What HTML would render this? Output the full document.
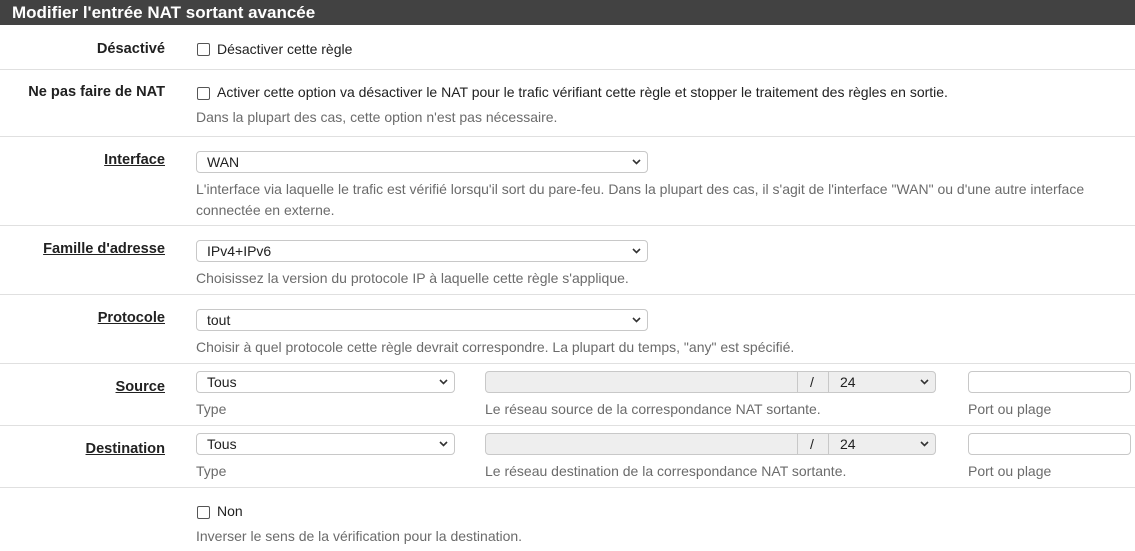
<!DOCTYPE html><html><head><meta charset="utf-8"><style>
body{margin:0;width:1135px;height:551px;overflow:hidden;background:#fff;font-family:"Liberation Sans",sans-serif;font-size:14px;color:#212121;position:relative}
.a{position:absolute;white-space:nowrap}
.hd{left:0;top:0;width:1135px;height:25px;background:#424242;color:#fff;font-weight:bold;font-size:17px;line-height:25px;padding-left:12px;box-sizing:border-box}
.sep{position:absolute;left:0;width:1135px;height:1px;background:#e0e0e0}
.lb{right:970px;font-weight:bold;text-align:right;font-size:14.6px}
.u{text-decoration:underline}
.hp{color:#6b6b6b}
.cb{position:absolute;width:11px;height:11px;border:1px solid #555;border-radius:2px;background:#fff}
.sel{position:absolute;border:1px solid #c8c8c8;border-radius:4px;height:22px;box-sizing:border-box;background:#fff;line-height:20px;padding-left:10px}
.sel svg{position:absolute;right:6px;top:7px}
.gr{background:#eee}
</style></head><body>
<div class="a hd">Modifier l'entrée NAT sortant avancée</div>
<div class="a lb" style="top:41px">Désactivé</div>
<div class="cb" style="left:197px;top:43px"></div>
<div class="a" style="left:217px;top:41px">Désactiver cette règle</div>
<div class="sep" style="top:69px"></div>
<div class="a lb" style="top:84px">Ne pas faire de NAT</div>
<div class="cb" style="left:197px;top:87px"></div>
<div class="a" style="left:217px;top:84px">Activer cette option va désactiver le NAT pour le trafic vérifiant cette règle et stopper le traitement des règles en sortie.</div>
<div class="a hp" style="left:196px;top:109px">Dans la plupart des cas, cette option n'est pas nécessaire.</div>
<div class="sep" style="top:136px"></div>
<div class="a lb u" style="top:152px">Interface</div>
<div class="sel" style="left:196px;top:151px;width:452px">WAN<svg width="9" height="6"><path d="M1 1l3.5 3.5L8 1" stroke="#333" stroke-width="1.6" fill="none"/></svg></div>
<div class="a hp" style="left:196px;top:181px">L'interface via laquelle le trafic est vérifié lorsqu'il sort du pare-feu. Dans la plupart des cas, il s'agit de l'interface "WAN" ou d'une autre interface</div>
<div class="a hp" style="left:196px;top:202px">connectée en externe.</div>
<div class="sep" style="top:225px"></div>
<div class="a lb u" style="top:241px">Famille d'adresse</div>
<div class="sel" style="left:196px;top:240px;width:452px">IPv4+IPv6<svg width="9" height="6"><path d="M1 1l3.5 3.5L8 1" stroke="#333" stroke-width="1.6" fill="none"/></svg></div>
<div class="a hp" style="left:196px;top:270px">Choisissez la version du protocole IP à laquelle cette règle s'applique.</div>
<div class="sep" style="top:294px"></div>
<div class="a lb u" style="top:310px">Protocole</div>
<div class="sel" style="left:196px;top:309px;width:452px">tout<svg width="9" height="6"><path d="M1 1l3.5 3.5L8 1" stroke="#333" stroke-width="1.6" fill="none"/></svg></div>
<div class="a hp" style="left:196px;top:339px">Choisir à quel protocole cette règle devrait correspondre. La plupart du temps, "any" est spécifié.</div>
<div class="sep" style="top:363px"></div>

<div class="a lb u" style="top:379px">Source</div>
<div class="sel" style="left:196px;top:371px;width:259px">Tous<svg width="9" height="6"><path d="M1 1l3.5 3.5L8 1" stroke="#333" stroke-width="1.6" fill="none"/></svg></div>
<div class="sel gr" style="left:485px;top:371px;width:451px;padding:0"><div class="a" style="left:311px;top:0;width:1px;height:20px;background:#c8c8c8"></div><div class="a" style="left:324px">/</div><div class="a" style="left:342px;top:0;width:1px;height:20px;background:#c8c8c8"></div><div class="a" style="left:354px">24</div><svg width="9" height="6"><path d="M1 1l3.5 3.5L8 1" stroke="#333" stroke-width="1.6" fill="none"/></svg></div>
<div class="sel" style="left:968px;top:371px;width:163px"></div>
<div class="a hp" style="left:196px;top:401px">Type</div>
<div class="a hp" style="left:485px;top:401px">Le réseau source de la correspondance NAT sortante.</div>
<div class="a hp" style="left:968px;top:401px">Port ou plage</div>
<div class="sep" style="top:425px"></div>

<div class="a lb u" style="top:441px">Destination</div>
<div class="sel" style="left:196px;top:433px;width:259px">Tous<svg width="9" height="6"><path d="M1 1l3.5 3.5L8 1" stroke="#333" stroke-width="1.6" fill="none"/></svg></div>
<div class="sel gr" style="left:485px;top:433px;width:451px;padding:0"><div class="a" style="left:311px;top:0;width:1px;height:20px;background:#c8c8c8"></div><div class="a" style="left:324px">/</div><div class="a" style="left:342px;top:0;width:1px;height:20px;background:#c8c8c8"></div><div class="a" style="left:354px">24</div><svg width="9" height="6"><path d="M1 1l3.5 3.5L8 1" stroke="#333" stroke-width="1.6" fill="none"/></svg></div>
<div class="sel" style="left:968px;top:433px;width:163px"></div>
<div class="a hp" style="left:196px;top:463px">Type</div>
<div class="a hp" style="left:485px;top:463px">Le réseau destination de la correspondance NAT sortante.</div>
<div class="a hp" style="left:968px;top:463px">Port ou plage</div>
<div class="sep" style="top:487px"></div>

<div class="cb" style="left:197px;top:506px"></div>
<div class="a" style="left:217px;top:503px">Non</div>
<div class="a hp" style="left:196px;top:528px">Inverser le sens de la vérification pour la destination.</div>
</body></html>
